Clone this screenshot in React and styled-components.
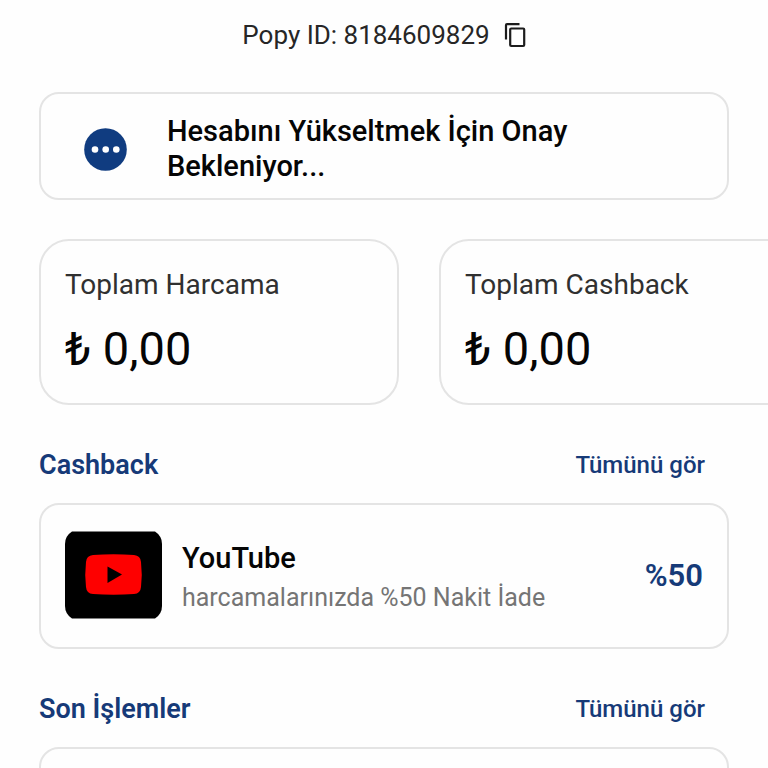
import React from "react";
import styled, { createGlobalStyle } from "styled-components";

const navy = "#163a78";
const popyId = "8184609829";

const GlobalStyle = createGlobalStyle`
  html {
    scrollbar-width: none;
  }

  body {
    margin: 0;
    background: #fefefe;
    color: #050505;
    font-family: Roboto, "Liberation Sans", sans-serif;
  }

  * {
    box-sizing: border-box;
  }
`;

const Page = styled.main`
  display: flex;
  flex-direction: column;
  padding: 17px 39px 40px;
`;

const PlainButton = styled.button`
  display: flex;
  padding: 0;
  border: 0;
  background: none;
  color: inherit;
  font: inherit;
  cursor: pointer;
`;

const AccountId = styled.div`
  display: flex;
  align-items: center;
  justify-content: center;
  gap: 14px;
  font-size: 26px;
  line-height: 36px;
  color: #262626;
`;

const Card = styled.section`
  border: 2px solid #e4e4e4;
  border-radius: 20px;
  background: #fefefe;
`;

const StatusCard = styled(Card)`
  display: flex;
  align-items: center;
  gap: 40px;
  margin-top: 39px;
  padding: 20px 43px 14px;
`;

const StatusIcon = styled.svg`
  flex: none;
  width: 43px;
  height: 43px;
`;

const StatusText = styled.p`
  max-width: 480px;
  margin: 0;
  font-size: 29px;
  font-weight: 500;
  line-height: 35px;
`;

const Totals = styled.div`
  display: flex;
  gap: 40px;
  margin: 39px -39px 0 0;
  overflow-x: auto;
  scrollbar-width: none;
`;

const TotalCard = styled(Card)`
  flex: 0 0 360px;
  padding: 24px;
  border-radius: 30px;
`;

const TotalLabel = styled.div`
  font-size: 28px;
  line-height: 40px;
  color: #303030;
`;

const TotalAmount = styled.div`
  margin-top: 14px;
  font-size: 47px;
  line-height: 60px;
`;

const SectionHeader = styled.header`
  display: flex;
  align-items: center;
  justify-content: space-between;
  margin: 40px 0 18px;
  padding-right: 24px;
  color: ${navy};
`;

const SectionTitle = styled.h2`
  margin: 0;
  font-size: 27px;
  font-weight: 600;
  line-height: 40px;
`;

const SeeAll = styled(PlainButton)`
  font-size: 24px;
  font-weight: 500;
`;

const OfferCard = styled(Card)`
  display: flex;
  align-items: center;
  gap: 20px;
  padding: 26px 24px 28px;
`;

const BrandLogo = styled.svg`
  flex: none;
  width: 97px;
  height: 88px;
`;

const OfferInfo = styled.div`
  flex: 1;
  padding-top: 6px;
`;

const OfferName = styled.h3`
  margin: 0;
  font-size: 29px;
  font-weight: 500;
  line-height: 40px;
`;

const OfferText = styled.p`
  margin: 0;
  font-size: 25px;
  line-height: 40px;
  color: #757575;
`;

const OfferRate = styled.div`
  font-size: 31px;
  font-weight: 600;
  color: ${navy};
`;

const TransactionsCard = styled(Card)`
  min-height: 146px;
`;

const totals = [
  { label: "Toplam Harcama", amount: "₺ 0,00" },
  { label: "Toplam Cashback", amount: "₺ 0,00" },
];

const CopyIcon = () => (
  <svg width="22" height="26" viewBox="0 0 22 26" fill="none" stroke="#1c1c1c" strokeWidth="2.2" aria-hidden="true">
    <path d="M2 17.5V3.2Q2 2.2 3 2.2H15.5" />
    <rect x="6.2" y="6.5" width="14" height="17.5" rx="1" />
  </svg>
);

const PendingIcon = () => (
  <StatusIcon viewBox="0 0 43 43" aria-hidden="true">
    <circle cx="21.5" cy="21.5" r="21.3" fill="#103c80" />
    <g fill="#fff">
      <circle cx="11" cy="21.5" r="3.3" />
      <circle cx="21.7" cy="21.5" r="3.3" />
      <circle cx="32.3" cy="21.5" r="3.3" />
    </g>
  </StatusIcon>
);

const YouTubeLogo = () => (
  <BrandLogo viewBox="0 0 97 88" aria-hidden="true">
    <path
      d="M7 .5H90Q97 5 97 13V75Q97 83 90 87.5H7Q0 83 0 75V13Q0 5 7 .5Z"
      fill="#000"
    />
    <path
      d="M28 24Q48.5 22.5 69 24Q75.5 24.5 76 31Q77.5 43.5 76 56Q75.5 62.5 69 63Q48.5 64.5 28 63Q21.5 62.5 21 56Q19.5 43.5 21 31Q21.5 24.5 28 24Z"
      fill="#fe0000"
    />
    <path d="M42.5 35.5L57 43.5L42.5 52Z" fill="#000" />
  </BrandLogo>
);

const Section = ({ title, children }) => (
  <div>
    <SectionHeader>
      <SectionTitle>{title}</SectionTitle>
      <SeeAll type="button">Tümünü gör</SeeAll>
    </SectionHeader>
    {children}
  </div>
);

const App = () => (
  <>
    <GlobalStyle />
    <Page>
      <AccountId>
        <span>Popy ID: {popyId}</span>
        <PlainButton type="button" onClick={() => navigator.clipboard?.writeText(popyId)}>
          <CopyIcon />
        </PlainButton>
      </AccountId>

      <StatusCard>
        <PendingIcon />
        <StatusText>Hesabını Yükseltmek İçin Onay Bekleniyor...</StatusText>
      </StatusCard>

      <Totals>
        {totals.map(({ label, amount }) => (
          <TotalCard key={label}>
            <TotalLabel>{label}</TotalLabel>
            <TotalAmount>{amount}</TotalAmount>
          </TotalCard>
        ))}
      </Totals>

      <Section title="Cashback">
        <OfferCard>
          <YouTubeLogo />
          <OfferInfo>
            <OfferName>YouTube</OfferName>
            <OfferText>harcamalarınızda %50 Nakit İade</OfferText>
          </OfferInfo>
          <OfferRate>%50</OfferRate>
        </OfferCard>
      </Section>

      <Section title="Son İşlemler">
        <TransactionsCard />
      </Section>
    </Page>
  </>
);

export default App;
